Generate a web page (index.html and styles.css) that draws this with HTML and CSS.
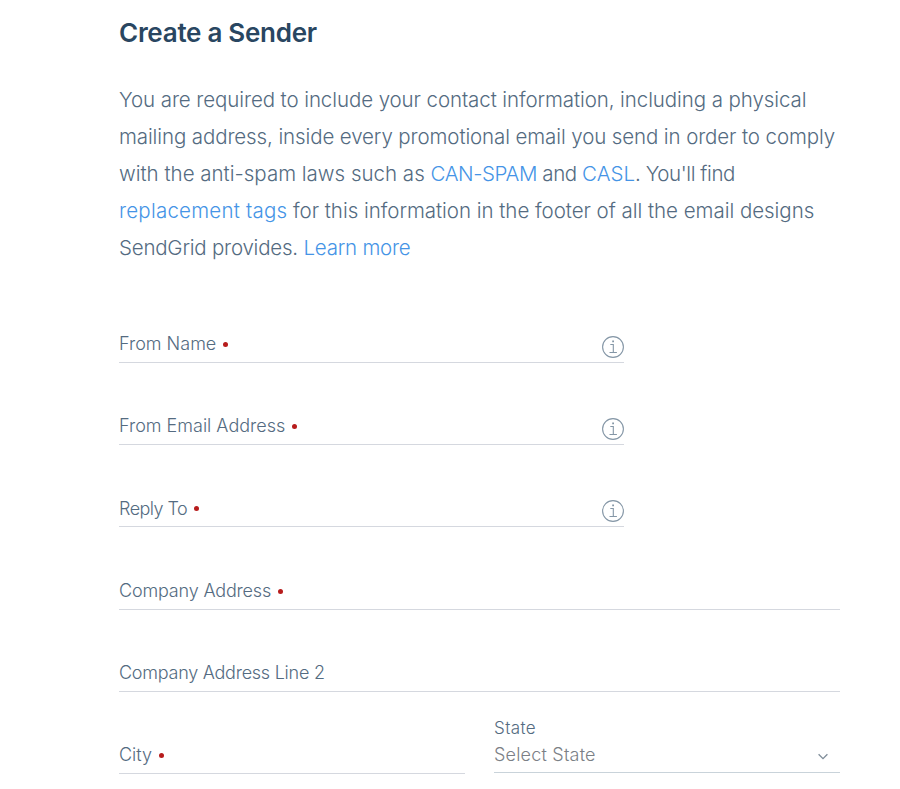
FILE: index.html
```html
<!DOCTYPE html>
<html lang="en">
<head>
<meta charset="utf-8">
<title>Create a Sender</title>
<link rel="stylesheet" href="styles.css">
</head>
<body>
<main class="page">
<h1 class="title">Create a Sender</h1>
<p class="intro">
<span class="line line-1">You are required to include your contact information, including a physical</span>
<span class="line line-2">mailing address, inside every promotional email you send in order to comply</span>
<span class="line line-3">with the anti-spam laws such as <span class="tight"><a>CAN-SPAM</a> and </span><a>CASL</a><span class="tight">. You'll find</span></span>
<span class="line line-4"><a class="loose">replacement tags</a> for this information in the footer of all the email designs</span>
<span class="line line-5">SendGrid provides. <a>Learn more</a></span>
</p>
<form class="form">
<div class="field short"><label class="required name">From Name</label>
<svg class="info" viewBox="0 0 24 24"><circle cx="12" cy="12" r="10.4"/><path d="M9.3 9.5h3v8M8.5 17.5h7.4"/><path class="tittle" d="M11.2 5.5h1.8v1.8h-1.8z"/></svg></div>
<div class="field short"><label class="required email">From Email Address</label>
<svg class="info" viewBox="0 0 24 24"><circle cx="12" cy="12" r="10.4"/><path d="M9.3 9.5h3v8M8.5 17.5h7.4"/><path class="tittle" d="M11.2 5.5h1.8v1.8h-1.8z"/></svg></div>
<div class="field short"><label class="required reply">Reply To</label>
<svg class="info" viewBox="0 0 24 24"><circle cx="12" cy="12" r="10.4"/><path d="M9.3 9.5h3v8M8.5 17.5h7.4"/><path class="tittle" d="M11.2 5.5h1.8v1.8h-1.8z"/></svg></div>
<div class="field tall"><label class="required company">Company Address</label></div>
<div class="field"><label class="company-2">Company Address Line 2</label></div>
<div class="columns">
<div class="field"><label class="required city">City</label></div>
<div class="field select"><label class="caption">State</label>
<div class="choice"><span>Select State</span><svg class="chevron" viewBox="0 0 12 8"><path d="M1.6 1.3l4.4 4.4 4.4-4.4"/></svg></div></div>
</div>
</form>
</main>
</body>
</html>
```
FILE: styles.css
```css
* { box-sizing: border-box; }
body {
  margin: 0;
  background: #fff;
  color: #546b81;
  font-family: Inter, "Liberation Sans", sans-serif;
  font-weight: 300;
}
.page { width: 721px; margin-left: 119px; padding-top: 13px; }
.title {
  margin: 0;
  color: #294661;
  font-size: 26px;
  line-height: 40px;
  font-weight: 600;
  letter-spacing: -0.27px;
}
.intro { margin: 28px 0 0; font-size: 20.5px; line-height: 37px; }
.line { display: block; white-space: nowrap; }
.line-1 { letter-spacing: -0.09px; }
.line-2 { letter-spacing: -0.11px; }
.line-4 { letter-spacing: -0.03px; }
.line-5 { letter-spacing: -0.22px; }
.tight { letter-spacing: -0.42px; }
.loose { letter-spacing: 0.22px; }
.intro a { color: #4594e6; }
.form { margin-top: 15px; }
.field {
  display: flex;
  align-items: flex-end;
  justify-content: space-between;
  height: 82px;
  padding-bottom: 6px;
  border-bottom: 1px solid #d5d8df;
  font-size: 18px;
  line-height: 24px;
}
.short { width: 505px; padding-bottom: 3px; }
.short label { margin-bottom: 3px; }
.short .reply { margin-bottom: 2px; letter-spacing: -0.55px; }
.short .reply::after { margin-top: -1px; }
.tall { height: 83px; }
.company { letter-spacing: -0.17px; }
.company-2 { letter-spacing: -0.25px; }
.required { display: flex; align-items: center; }
.required::after {
  content: "";
  width: 5px;
  height: 5px;
  margin: 1px 0 0 7px;
  border-radius: 50%;
  background: #b71c1c;
}
.info { width: 24px; height: 24px; margin-right: -1px; fill: none; stroke: #8496a6; stroke-width: 1.1; }
.info .tittle { fill: #8496a6; stroke: none; }
.columns { display: grid; grid-template-columns: 346px 346px; gap: 29px; }
.select {
  flex-direction: column;
  align-items: stretch;
  justify-content: flex-end;
  height: 81px;
  padding-bottom: 5px;
  border-color: #c9d3da;
}
.caption { font-size: 17px; line-height: 27px; margin-bottom: 1px; letter-spacing: 0.4px; }
.choice { display: flex; align-items: center; justify-content: space-between; color: #7b8086; letter-spacing: 0.2px; }
.chevron { width: 12px; height: 8px; margin: 3px 11px 0 0; fill: none; stroke: #7f8d99; stroke-width: 1.3; }
```
